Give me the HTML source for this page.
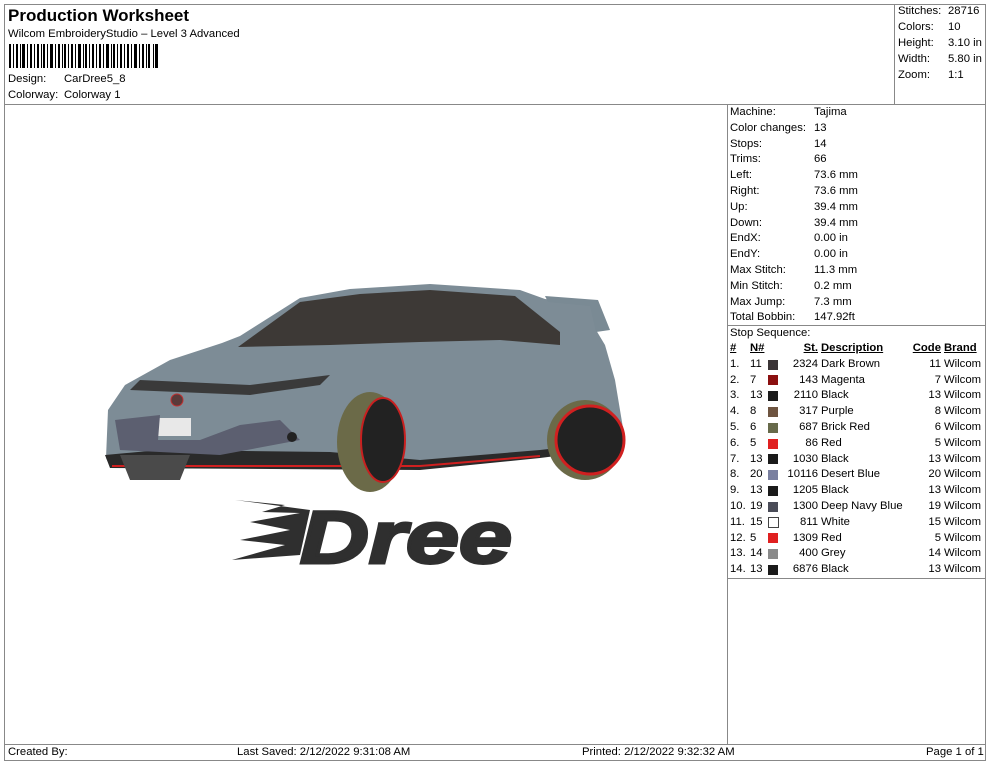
<!DOCTYPE html>
<html><head><meta charset="utf-8"><style>
body{margin:0;width:990px;height:762px;background:#fff;font-family:"Liberation Sans",Arial,sans-serif;font-size:11.3px;color:#000;position:relative;overflow:hidden}
.a{position:absolute;white-space:nowrap}
.ln{position:absolute;background:#888}
.r{text-align:right}
td{height:15.8px;padding:0}
</style></head><body>
<div class="ln" style="left:4px;top:4px;width:982px;height:1px"></div>
<div class="ln" style="left:4px;top:104px;width:982px;height:1px"></div>
<div class="ln" style="left:4px;top:744px;width:982px;height:1px"></div>
<div class="ln" style="left:4px;top:760px;width:982px;height:1px"></div>
<div class="ln" style="left:4px;top:4px;width:1px;height:757px"></div>
<div class="ln" style="left:985px;top:4px;width:1px;height:757px"></div>
<div class="ln" style="left:894px;top:4px;width:1px;height:100px"></div>
<div class="ln" style="left:727px;top:104px;width:1px;height:640px"></div>
<div class="ln" style="left:727px;top:325px;width:258px;height:1px"></div>
<div class="ln" style="left:727px;top:578px;width:258px;height:1px"></div>

<div class="a" style="left:8px;top:6px;font-size:17px;font-weight:bold">Production Worksheet</div>
<div class="a" style="left:8px;top:28px">Wilcom EmbroideryStudio – Level 3 Advanced</div>
<svg class="a" style="left:9px;top:44px" width="150" height="24">
<g fill="#000">
<rect x="0" y="0" width="2" height="24"/><rect x="4" y="0" width="1" height="24"/><rect x="7" y="0" width="2" height="24"/><rect x="11" y="0" width="1" height="24"/><rect x="13" y="0" width="3" height="24"/><rect x="18" y="0" width="1" height="24"/><rect x="21" y="0" width="2" height="24"/><rect x="25" y="0" width="1" height="24"/><rect x="28" y="0" width="2" height="24"/><rect x="32" y="0" width="1" height="24"/><rect x="34" y="0" width="2" height="24"/><rect x="38" y="0" width="1" height="24"/><rect x="41" y="0" width="3" height="24"/><rect x="46" y="0" width="1" height="24"/><rect x="49" y="0" width="2" height="24"/><rect x="53" y="0" width="1" height="24"/><rect x="55" y="0" width="2" height="24"/><rect x="59" y="0" width="1" height="24"/><rect x="62" y="0" width="2" height="24"/><rect x="66" y="0" width="1" height="24"/><rect x="69" y="0" width="3" height="24"/><rect x="74" y="0" width="1" height="24"/><rect x="76" y="0" width="2" height="24"/><rect x="80" y="0" width="1" height="24"/><rect x="83" y="0" width="2" height="24"/><rect x="87" y="0" width="1" height="24"/><rect x="90" y="0" width="2" height="24"/><rect x="94" y="0" width="1" height="24"/><rect x="97" y="0" width="3" height="24"/><rect x="102" y="0" width="1" height="24"/><rect x="104" y="0" width="2" height="24"/><rect x="108" y="0" width="1" height="24"/><rect x="111" y="0" width="2" height="24"/><rect x="115" y="0" width="1" height="24"/><rect x="118" y="0" width="2" height="24"/><rect x="122" y="0" width="1" height="24"/><rect x="125" y="0" width="3" height="24"/><rect x="130" y="0" width="1" height="24"/><rect x="133" y="0" width="2" height="24"/><rect x="137" y="0" width="1" height="24"/><rect x="139" y="0" width="2" height="24"/><rect x="144" y="0" width="1" height="24"/><rect x="146" y="0" width="3" height="24"/>
</g></svg>
<div class="a" style="left:8px;top:73px">Design:</div><div class="a" style="left:64px;top:73px">CarDree5_8</div>
<div class="a" style="left:8px;top:89px">Colorway:</div><div class="a" style="left:64px;top:89px">Colorway 1</div>

<div class="a" style="left:898px;top:5px">Stitches:</div><div class="a" style="left:948px;top:5px">28716</div>
<div class="a" style="left:898px;top:21px">Colors:</div><div class="a" style="left:948px;top:21px">10</div>
<div class="a" style="left:898px;top:37px">Height:</div><div class="a" style="left:948px;top:37px">3.10 in</div>
<div class="a" style="left:898px;top:53px">Width:</div><div class="a" style="left:948px;top:53px">5.80 in</div>
<div class="a" style="left:898px;top:69px">Zoom:</div><div class="a" style="left:948px;top:69px">1:1</div>

<div style="position:absolute;left:730px;top:105px;line-height:15.8px">
<div>Machine:</div><div>Color changes:</div><div>Stops:</div><div>Trims:</div><div>Left:</div><div>Right:</div><div>Up:</div><div>Down:</div><div>EndX:</div><div>EndY:</div><div>Max Stitch:</div><div>Min Stitch:</div><div>Max Jump:</div><div>Total Bobbin:</div><div>Stop Sequence:</div>
</div>
<div style="position:absolute;left:814px;top:105px;line-height:15.8px">
<div>Tajima</div><div>13</div><div>14</div><div>66</div><div>73.6 mm</div><div>73.6 mm</div><div>39.4 mm</div><div>39.4 mm</div><div>0.00 in</div><div>0.00 in</div><div>11.3 mm</div><div>0.2 mm</div><div>7.3 mm</div><div>147.92ft</div>
</div>

<div style="position:absolute;left:730px;top:341px;width:254px;line-height:15.8px">
<table style="border-collapse:collapse;font-size:11.3px;width:254px" cellpadding="0" cellspacing="0">
<tr style="font-weight:bold;text-decoration:underline"><td style="width:20px">#</td><td style="width:18px">N#</td><td style="width:12px"></td><td class="r" style="width:38px">St.</td><td style="padding-left:3px">Description</td><td class="r">Code</td><td style="padding-left:3px;width:40px">Brand</td></tr>
<tr><td>1.</td><td>11</td><td><i style="display:block;width:10px;height:10px;background:#3a3436"></i></td><td class="r">2324</td><td style="padding-left:3px">Dark Brown</td><td class="r">11</td><td style="padding-left:3px">Wilcom</td></tr>
<tr><td>2.</td><td>7</td><td><i style="display:block;width:10px;height:10px;background:#8b0f10"></i></td><td class="r">143</td><td style="padding-left:3px">Magenta</td><td class="r">7</td><td style="padding-left:3px">Wilcom</td></tr>
<tr><td>3.</td><td>13</td><td><i style="display:block;width:10px;height:10px;background:#1a1a1a"></i></td><td class="r">2110</td><td style="padding-left:3px">Black</td><td class="r">13</td><td style="padding-left:3px">Wilcom</td></tr>
<tr><td>4.</td><td>8</td><td><i style="display:block;width:10px;height:10px;background:#6e5440"></i></td><td class="r">317</td><td style="padding-left:3px">Purple</td><td class="r">8</td><td style="padding-left:3px">Wilcom</td></tr>
<tr><td>5.</td><td>6</td><td><i style="display:block;width:10px;height:10px;background:#676a4a"></i></td><td class="r">687</td><td style="padding-left:3px">Brick Red</td><td class="r">6</td><td style="padding-left:3px">Wilcom</td></tr>
<tr><td>6.</td><td>5</td><td><i style="display:block;width:10px;height:10px;background:#e02020"></i></td><td class="r">86</td><td style="padding-left:3px">Red</td><td class="r">5</td><td style="padding-left:3px">Wilcom</td></tr>
<tr><td>7.</td><td>13</td><td><i style="display:block;width:10px;height:10px;background:#1a1a1a"></i></td><td class="r">1030</td><td style="padding-left:3px">Black</td><td class="r">13</td><td style="padding-left:3px">Wilcom</td></tr>
<tr><td>8.</td><td>20</td><td><i style="display:block;width:10px;height:10px;background:#7a80a0"></i></td><td class="r">10116</td><td style="padding-left:3px">Desert Blue</td><td class="r">20</td><td style="padding-left:3px">Wilcom</td></tr>
<tr><td>9.</td><td>13</td><td><i style="display:block;width:10px;height:10px;background:#1a1a1a"></i></td><td class="r">1205</td><td style="padding-left:3px">Black</td><td class="r">13</td><td style="padding-left:3px">Wilcom</td></tr>
<tr><td>10.</td><td>19</td><td><i style="display:block;width:10px;height:10px;background:#4a4c58"></i></td><td class="r">1300</td><td style="padding-left:3px">Deep Navy Blue</td><td class="r">19</td><td style="padding-left:3px">Wilcom</td></tr>
<tr><td>11.</td><td>15</td><td><i style="display:block;width:9px;height:9px;border:1px solid #444;background:#fff"></i></td><td class="r">811</td><td style="padding-left:3px">White</td><td class="r">15</td><td style="padding-left:3px">Wilcom</td></tr>
<tr><td>12.</td><td>5</td><td><i style="display:block;width:10px;height:10px;background:#e02020"></i></td><td class="r">1309</td><td style="padding-left:3px">Red</td><td class="r">5</td><td style="padding-left:3px">Wilcom</td></tr>
<tr><td>13.</td><td>14</td><td><i style="display:block;width:10px;height:10px;background:#8a8a8a"></i></td><td class="r">400</td><td style="padding-left:3px">Grey</td><td class="r">14</td><td style="padding-left:3px">Wilcom</td></tr>
<tr><td>14.</td><td>13</td><td><i style="display:block;width:10px;height:10px;background:#1a1a1a"></i></td><td class="r">6876</td><td style="padding-left:3px">Black</td><td class="r">13</td><td style="padding-left:3px">Wilcom</td></tr>
</table></div>

<svg class="a" style="left:0;top:0" width="727" height="740">
<path d="M106 458 L108 410 L125 385 L170 360 L222 343 L240 336 L300 298 L350 289 L430 284 L520 290 L545 299 L590 304 L596 330 L605 345 L615 380 L625 440 L610 448 L540 455 L420 468 L300 468 L200 468 L110 466 Z" fill="#7d8c96"/>
<path d="M238 347 L300 302 L360 294 L430 290 L515 296 L560 332 L560 345 L500 340 L420 342 L330 345 Z" fill="#3d3936"/>
<path d="M105 455 L160 450 L330 452 L420 460 L540 450 L610 442 L620 448 L540 458 L420 470 L110 468 Z" fill="#2a2a2a"/>
<path d="M112 466 L420 466 L540 456" stroke="#d02020" stroke-width="2" fill="none"/>
<path d="M130 390 L250 395 L320 385 L330 375 L250 385 L140 380 Z" fill="#3a3a3a"/>
<rect x="158" y="418" width="33" height="18" fill="#e8e8e8"/>
<path d="M115 420 L160 415 L158 440 L200 440 L240 425 L280 420 L300 440 L220 455 L120 450 Z" fill="#5c5f70"/>
<circle cx="292" cy="437" r="5" fill="#222"/>
<circle cx="177" cy="400" r="6" fill="#5a3a3a" stroke="#c03030"/>
<path d="M120 455 L190 455 L180 480 L130 480 Z" fill="#4a4a4a"/>
<ellipse cx="370" cy="442" rx="33" ry="50" fill="#6b6a48"/>
<ellipse cx="383" cy="440" rx="22" ry="42" fill="#222" stroke="#c82020" stroke-width="2"/>
<ellipse cx="585" cy="440" rx="38" ry="40" fill="#6b6a48"/>
<circle cx="590" cy="440" r="34" fill="#222" stroke="#d02020" stroke-width="3"/>
<path d="M598 300 L545 296 L548 302 L590 306 L596 332 L610 330 Z" fill="#7a8a94"/>
<path d="M235 500 L285 505 L262 512 L300 513 L250 522 L290 530 L240 540 L285 545 L232 560 L300 555 L310 510 Z" fill="#2f2f2f"/>
<text x="300" y="563" font-family="Liberation Sans" font-weight="bold" font-style="italic" font-size="74" fill="#2f2f2f" stroke="#2f2f2f" stroke-width="3" textLength="212" lengthAdjust="spacingAndGlyphs">Dree</text>
</svg>

<div class="a" style="left:8px;top:746px">Created By:</div>
<div class="a" style="left:237px;top:746px">Last Saved: 2/12/2022 9:31:08 AM</div>
<div class="a" style="left:582px;top:746px">Printed: 2/12/2022 9:32:32 AM</div>
<div class="a" style="left:926px;top:746px">Page 1 of 1</div>
</body></html>
